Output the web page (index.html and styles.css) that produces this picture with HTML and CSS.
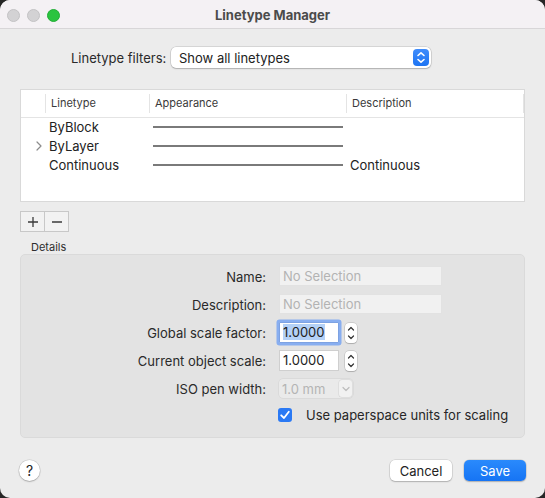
FILE: index.html
```html
<!DOCTYPE html>
<html lang="en">
<head>
  <meta charset="UTF-8">
  <meta name="viewport" content="width=device-width, initial-scale=1.0">
  <title>Linetype Manager</title>
  <link rel="stylesheet" href="styles.css">
</head>
<body>
  <div class="window">
    <!-- Title bar -->
    <div class="titlebar">
      <div class="lights">
        <span class="light"></span>
        <span class="light"></span>
        <span class="light green"></span>
      </div>
      <div class="title">Linetype Manager</div>
    </div>

    <div class="content">
      <!-- Filter row -->
      <div class="filter-row">
        <label class="filter-label">Linetype filters:</label>
        <div class="select">
          <span>Show all linetypes</span>
          <span class="select-btn">
            <svg width="16" height="17" viewBox="0 0 16 17">
              <path d="M5 6.5 L8 3.8 L11 6.5" fill="none" stroke="#fff" stroke-width="1.6" stroke-linecap="round" stroke-linejoin="round"/>
              <path d="M5 10.5 L8 13.2 L11 10.5" fill="none" stroke="#fff" stroke-width="1.6" stroke-linecap="round" stroke-linejoin="round"/>
            </svg>
          </span>
        </div>
      </div>

      <!-- Linetype table -->
      <div class="table">
        <div class="table-head">
          <div class="th th-expand"></div>
          <div class="th">Linetype</div>
          <div class="th">Appearance</div>
          <div class="th th-last">Description</div>
        </div>
        <div class="table-row">
          <div class="td td-expand"></div>
          <div class="td">ByBlock</div>
          <div class="td"><span class="line-sample"></span></div>
          <div class="td"></div>
        </div>
        <div class="table-row">
          <div class="td td-expand">
            <svg width="8" height="12" viewBox="0 0 8 12">
              <path d="M2 2 L6 6 L2 10" fill="none" stroke="#8c8c8c" stroke-width="1.2" stroke-linecap="round" stroke-linejoin="round"/>
            </svg>
          </div>
          <div class="td">ByLayer</div>
          <div class="td"><span class="line-sample"></span></div>
          <div class="td"></div>
        </div>
        <div class="table-row">
          <div class="td td-expand"></div>
          <div class="td">Continuous</div>
          <div class="td"><span class="line-sample"></span></div>
          <div class="td">Continuous</div>
        </div>
      </div>

      <!-- Add / remove -->
      <div class="add-remove">
        <button class="seg-btn">
          <svg width="12" height="12" viewBox="0 0 12 12"><path d="M6 1 V11 M1 6 H11" stroke="#3a3a3a" stroke-width="1.3"/></svg>
        </button>
        <button class="seg-btn">
          <svg width="12" height="12" viewBox="0 0 12 12"><path d="M1 6 H11" stroke="#3a3a3a" stroke-width="1.3"/></svg>
        </button>
      </div>

      <div class="details-label">Details</div>

      <!-- Details panel -->
      <div class="details">
        <label class="field-label">Name:</label>
        <div><div class="field field-wide disabled">No Selection</div></div>

        <label class="field-label">Description:</label>
        <div><div class="field field-wide disabled">No Selection</div></div>

        <label class="field-label">Global scale factor:</label>
        <div class="field-line">
          <div class="field field-num focused"><span class="sel">1.0000</span></div>
          <span class="stepper">
            <svg width="12" height="20" viewBox="0 0 12 20">
              <path d="M3.5 7 L6 4.5 L8.5 7" fill="none" stroke="#333" stroke-width="1.2" stroke-linecap="round" stroke-linejoin="round"/>
              <path d="M3.5 13 L6 15.5 L8.5 13" fill="none" stroke="#333" stroke-width="1.2" stroke-linecap="round" stroke-linejoin="round"/>
            </svg>
          </span>
        </div>

        <label class="field-label">Current object scale:</label>
        <div class="field-line">
          <div class="field field-num">1.0000</div>
          <span class="stepper">
            <svg width="12" height="20" viewBox="0 0 12 20">
              <path d="M3.5 7 L6 4.5 L8.5 7" fill="none" stroke="#333" stroke-width="1.2" stroke-linecap="round" stroke-linejoin="round"/>
              <path d="M3.5 13 L6 15.5 L8.5 13" fill="none" stroke="#333" stroke-width="1.2" stroke-linecap="round" stroke-linejoin="round"/>
            </svg>
          </span>
        </div>

        <label class="field-label">ISO pen width:</label>
        <div>
          <div class="combo">
            <span class="combo-text">1.0 mm</span>
            <span class="combo-btn">
              <svg width="10" height="8" viewBox="0 0 10 8"><path d="M2 2.5 L5 5.5 L8 2.5" fill="none" stroke="#bdbdbd" stroke-width="1.2" stroke-linecap="round" stroke-linejoin="round"/></svg>
            </span>
          </div>
        </div>

        <div></div>
        <div class="check-line">
          <span class="checkbox">
            <svg width="14" height="14" viewBox="0 0 14 14"><path d="M3.2 7.3 L6 10 L10.8 3.8" fill="none" stroke="#fff" stroke-width="1.8" stroke-linecap="round" stroke-linejoin="round"/></svg>
          </span>
          <span class="check-text">Use paperspace units for scaling</span>
        </div>
      </div>

      <!-- Footer -->
      <div class="footer">
        <button class="help-btn">?</button>
        <div class="footer-right">
          <button class="btn">Cancel</button>
          <button class="btn btn-primary">Save</button>
        </div>
      </div>
    </div>
  </div>
</body>
</html>
```

FILE: styles.css
```css
/* Universal Styles */
html {
  background: #262626;
}

body {
  margin: 0;
  padding: 0;
  font-family: 'Inter', 'Liberation Sans', sans-serif;
  font-size: 13px;
  color: #262626;
}

button {
  font-family: inherit;
}

/* Window */
.window {
  width: 545px;
  height: 498px;
  background: #ececec;
  border-radius: 10px;
  overflow: hidden;
  display: flex;
  flex-direction: column;
}

.titlebar {
  height: 28px;
  background: #f4f1f4;
  border-bottom: 1px solid #d8d6d8;
  display: flex;
  align-items: center;
  position: relative;
}

.lights {
  display: flex;
  gap: 7px;
  padding-left: 7px;
  padding-top: 2px;
}

.light {
  width: 11px;
  height: 11px;
  border-radius: 50%;
  background: #d3d2d4;
  border: 0.5px solid #c3c2c4;
}

.light.green {
  background: #2ac43f;
  border-color: #22ad36;
}

.title {
  position: absolute;
  left: 0;
  right: 0;
  top: 7px;
  text-align: center;
  font-weight: 700;
  font-size: 13px;
  color: #4b4b4b;
  pointer-events: none;
}

.content {
  padding: 0 20px 0 20px;
  display: flex;
  flex-direction: column;
}

/* Filter row */
.filter-row {
  display: flex;
  align-items: center;
  margin-top: 18px;
  padding-left: 51px;
}

.filter-label {
  width: 100px;
  color: #2a2a2a;
}

.select {
  width: 250px;
  height: 21px;
  background: #fff;
  border-radius: 5px;
  box-shadow: 0 0 0 0.5px rgba(0, 0, 0, 0.18), 0 1px 1.5px rgba(0, 0, 0, 0.18);
  display: flex;
  align-items: center;
  justify-content: space-between;
  padding: 0 2px 0 8px;
  color: #222;
}

.select-btn {
  width: 16px;
  height: 17px;
  border-radius: 4px;
  background: linear-gradient(#3f8cfb, #1d74f3);
  display: flex;
}

/* Table */
.table {
  margin-top: 21px;
  height: 111px;
  background: #fff;
  border: 1px solid #d9d9d9;
}

.table-head,
.table-row {
  display: grid;
  grid-template-columns: 24px 104px 197px 1fr;
}

.table-head {
  height: 27px;
  border-bottom: 1px solid #e4e4e4;
  align-items: center;
}

.th {
  font-size: 11px;
  color: #3a3a3a;
  border-left: 1px solid #e4e4e4;
  height: 19px;
  line-height: 19px;
  padding-left: 5px;
}

.th-expand {
  border-left: none;
}

.th-last {
  border-right: 1px solid #e4e4e4;
}

.table-row {
  height: 19px;
  box-sizing: border-box;
  padding-bottom: 1px;
  align-items: center;
}

.td {
  padding-left: 4px;
  color: #222;
  white-space: nowrap;
}

.td-expand {
  padding-left: 14px;
  display: flex;
  align-items: center;
}

.line-sample {
  display: block;
  width: 190px;
  height: 2px;
  background: #7a7a7a;
}

/* Add / remove */
.add-remove {
  display: flex;
  margin-top: 9px;
  width: 49px;
  height: 21px;
  box-sizing: border-box;
  border: 1px solid #c8c8c8;
  background: #f2f2f2;
}

.seg-btn {
  flex: 1;
  border: none;
  background: transparent;
  padding: 0;
  display: flex;
  align-items: center;
  justify-content: center;
}

.seg-btn + .seg-btn {
  border-left: 1px solid #c8c8c8;
}

.details-label {
  font-size: 11px;
  color: #2e2e2e;
  margin: 9px 0 0 11px;
  height: 13px;
  line-height: 13px;
}

/* Details panel */
.details {
  margin-top: 0;
  background: #e3e3e3;
  border: 1px solid #dadada;
  border-radius: 5px;
  display: grid;
  grid-template-columns: 245px 1fr;
  grid-auto-rows: 21px;
  column-gap: 13px;
  row-gap: 7px;
  padding: 11px 0 10px 0;
}

.field-label {
  text-align: right;
  align-self: center;
  color: #2a2a2a;
}

.field {
  height: 20px;
  line-height: 18px;
  box-sizing: border-box;
  padding-left: 3px;
  background: #fff;
  border: 1px solid #cfcfcf;
  color: #222;
}

.field-wide {
  width: 163px;
}

.field.disabled {
  background: #f1f1f1;
  border-color: #e2e2e2;
  color: #b3b3b3;
}

.field-line {
  display: flex;
  align-items: center;
  gap: 6px;
}

.field-num {
  width: 60px;
  height: 21px;
  line-height: 19px;
}

.field-num.focused {
  border-color: #7da2e2;
  box-shadow: 0 0 0 2.5px #88aef0;
  border-radius: 1px;
}

.sel {
  background: #b4d1f7;
}

.stepper {
  width: 12px;
  height: 20px;
  background: #fff;
  border-radius: 4px;
  box-shadow: 0 0 0 0.5px rgba(0, 0, 0, 0.2), 0 1px 1px rgba(0, 0, 0, 0.15);
  display: flex;
}

.combo {
  width: 74px;
  height: 19px;
  background: #eaeaea;
  border-radius: 4px;
  box-shadow: 0 0 0 0.5px rgba(0, 0, 0, 0.08);
  display: flex;
  align-items: center;
  justify-content: space-between;
  margin-top: 1px;
}

.combo-text {
  padding-left: 3px;
  color: #b4b4b4;
}

.combo-btn {
  width: 13px;
  height: 17px;
  margin-right: 1px;
  border-radius: 3px;
  background: #f1f1f1;
  box-shadow: 0 0 0 0.5px rgba(0, 0, 0, 0.1);
  display: flex;
  align-items: center;
  justify-content: center;
}

.check-line {
  display: flex;
  align-items: center;
  margin-top: -3px;
}

.checkbox {
  width: 14px;
  height: 14px;
  border-radius: 3px;
  background: #2a79f4;
  display: flex;
  margin-left: -1px;
}

.check-text {
  margin-left: 14px;
  color: #262626;
}

/* Footer */
.footer {
  margin-top: 22px;
  display: flex;
  align-items: center;
  justify-content: space-between;
}

.help-btn {
  width: 21px;
  height: 21px;
  border-radius: 50%;
  border: none;
  background: #fff;
  box-shadow: 0 0 0 0.5px rgba(0, 0, 0, 0.15), 0 1px 1.5px rgba(0, 0, 0, 0.2);
  font-size: 14px;
  color: #222;
  padding: 0;
  margin-left: -1px;
}

.footer-right {
  display: flex;
  gap: 12px;
  margin-right: -1px;
}

.btn {
  width: 62px;
  height: 21px;
  border: none;
  border-radius: 5px;
  background: #fff;
  box-shadow: 0 0 0 0.5px rgba(0, 0, 0, 0.15), 0 1px 1.5px rgba(0, 0, 0, 0.2);
  font-size: 13px;
  color: #222;
  padding: 0;
}

.btn-primary {
  background: linear-gradient(#2a8afc, #1674f4);
  color: #fff;
}
```
